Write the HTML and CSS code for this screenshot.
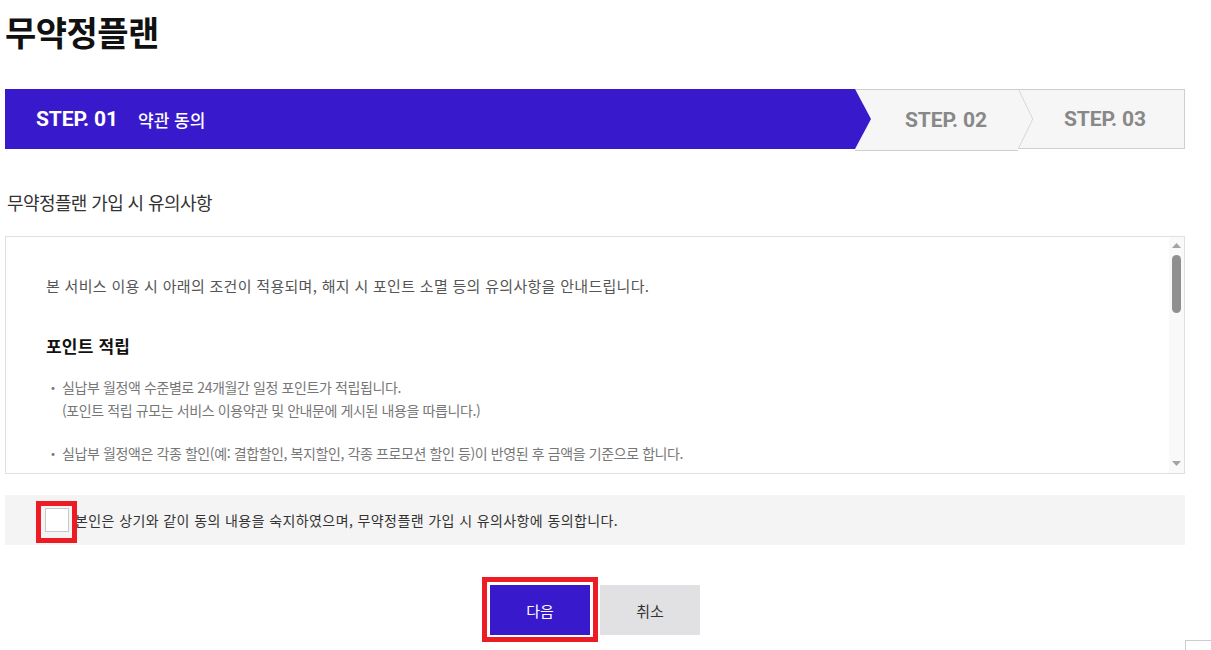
FILE: index.html
```html
<!DOCTYPE html>
<html lang="ko">
<head>
<meta charset="utf-8">
<title>무약정플랜</title>
<link rel="stylesheet" href="styles.css">
</head>
<body>
<div class="page">
  <h1 class="title">무약정플랜</h1>

  <div class="steps">
    <div class="step step-active">
      <span class="step-num">STEP. 01</span>
      <span class="step-name">약관 동의</span>
    </div>
    <div class="step step-idle step-two"><span class="step-num">STEP. 02</span></div>
    <svg class="step-chevron" width="16" height="60" viewBox="0 0 16 60" aria-hidden="true">
      <polyline points="0.5,0 15,30 0.5,60" fill="none" stroke="#d6d6d6" stroke-width="1"/>
    </svg>
    <div class="step step-idle step-three"><span class="step-num">STEP. 03</span></div>
  </div>

  <h2 class="subtitle">무약정플랜 가입 시 유의사항</h2>

  <div class="terms">
    <div class="terms-body">
      <p class="terms-intro">본 서비스 이용 시 아래의 조건이 적용되며, 해지 시 포인트 소멸 등의 유의사항을 안내드립니다.</p>

      <h3 class="terms-head">포인트 적립</h3>
      <ul class="terms-list">
        <li>실납부 월정액 수준별로 24개월간 일정 포인트가 적립됩니다.<br>(포인트 적립 규모는 서비스 이용약관 및 안내문에 게시된 내용을 따릅니다.)</li>
        <li>실납부 월정액은 각종 할인(예: 결합할인, 복지할인, 각종 프로모션 할인 등)이 반영된 후 금액을 기준으로 합니다.</li>
        <li>포인트는 매월 요금 청구 이후 익월에 적립됩니다.</li>
      </ul>

      <h3 class="terms-head">포인트 소멸</h3>
      <ul class="terms-list">
        <li>적립된 포인트의 유효기간은 적립일로부터 5년이며, 유효기간이 지난 포인트는 자동 소멸됩니다.</li>
        <li>서비스 해지 시 잔여 포인트는 해지일에 모두 소멸됩니다.</li>
      </ul>
    </div>
    <div class="scrollbar" aria-hidden="true">
      <svg class="sb-arrow sb-up" width="9" height="5" viewBox="0 0 9 5"><polygon points="0,5 4.5,0 9,5" fill="#a3a3a3"/></svg>
      <div class="sb-track"><div class="sb-thumb"></div></div>
      <svg class="sb-arrow sb-down" width="9" height="5" viewBox="0 0 9 5"><polygon points="0,0 4.5,5 9,0" fill="#a3a3a3"/></svg>
    </div>
  </div>

  <label class="agree">
    <span class="check-wrap"><input class="check" type="checkbox"></span>
    <span class="agree-text">본인은 상기와 같이 동의 내용을 숙지하였으며, 무약정플랜 가입 시 유의사항에 동의합니다.</span>
  </label>

  <div class="actions">
    <span class="btn-mark"><button class="btn btn-primary" type="button">다음</button></span>
    <button class="btn btn-cancel" type="button">취소</button>
  </div>
</div>
<div class="float-box"></div>
</body>
</html>
```

FILE: styles.css
```css
html {
  overflow: hidden;
}
html, body {
  margin: 0;
  padding: 0;
  background: #fff;
}
body {
  font-family: "Noto Sans CJK KR", "Noto Sans", sans-serif;
  color: #222;
}
.page {
  width: 1180px;
  padding-left: 5px;
  padding-bottom: 30px;
}
.title {
  margin: 0;
  padding-top: 10px;
  font-size: 34px;
  line-height: 44px;
  font-weight: 700;
  color: #111;
  letter-spacing: -0.5px;
}
.steps {
  margin-top: 35px;
  display: flex;
  height: 60px;
}
.step {
  display: flex;
  align-items: center;
  box-sizing: border-box;
  height: 60px;
}
.step-num {
  font-family: Roboto, "Liberation Sans", sans-serif;
  font-weight: 700;
  font-size: 21px;
  letter-spacing: -0.1px;
}
.step-active {
  flex: 1;
  position: relative;
  z-index: 1;
  background: #3819cb;
  color: #fff;
  padding-left: 31px;
  gap: 20px;
  clip-path: polygon(0 0, calc(100% - 16px) 0, 100% 50%, calc(100% - 16px) 100%, 0 100%);
}
.step-name {
  font-size: 17px;
  font-weight: 500;
  letter-spacing: 0;
}
.step-idle {
  background: #f6f6f6;
  color: #888;
  border-top: 1px solid #cfcfcf;
  border-bottom: 1px solid #cfcfcf;
  justify-content: center;
}
.step-two {
  width: 144px;
  margin-left: -16px;
  padding-left: 19px;
  box-sizing: content-box;
}
.step-chevron {
  display: block;
  background: #f6f6f6;
  border-top: 1px solid #cfcfcf;
  border-bottom: 1px solid #cfcfcf;
  box-sizing: border-box;
}
.step-three {
  width: 151px;
  border-right: 1px solid #cfcfcf;
  padding-right: 8px;
}
.subtitle {
  margin: 40px 0 0 2px;
  font-size: 18px;
  line-height: 26px;
  font-weight: 400;
  color: #333;
  letter-spacing: -0.6px;
}
.terms {
  margin-top: 21px;
  height: 236px;
  border: 1px solid #e0e0e0;
  display: flex;
}
.terms-body {
  flex: 1;
  overflow: hidden;
  padding: 0 40px;
}
.scrollbar {
  width: 15px;
  background: #f9f9f9;
  display: flex;
  flex-direction: column;
  align-items: center;
}
.sb-arrow {
  display: block;
  flex: none;
}
.sb-up {
  margin-top: 6px;
}
.sb-down {
  margin-bottom: 7px;
}
.sb-track {
  flex: 1;
  width: 9px;
  padding-top: 7px;
}
.sb-thumb {
  width: 9px;
  height: 58px;
  border-radius: 5px;
  background: #8f8f8f;
}
.terms-intro {
  margin: 39px 0 0;
  font-size: 15px;
  line-height: 20px;
  color: #555;
  letter-spacing: 0.3px;
}
.terms-head {
  margin: 40px 0 0;
  font-size: 17px;
  line-height: 20px;
  font-weight: 700;
  color: #111;
  letter-spacing: 0.2px;
}
.terms-list {
  list-style: none;
  margin: 20px 0 0;
  padding: 0 0 0 4px;
}
.terms-list li {
  position: relative;
  padding-left: 12px;
  font-size: 14px;
  line-height: 23px;
  color: #777;
  letter-spacing: -0.4px;
  margin-bottom: 20px;
}
.terms-list li::before {
  content: "・";
  position: absolute;
  left: -4px;
  top: 0;
}
.agree {
  margin-top: 21px;
  height: 50px;
  background: #f4f4f4;
  display: flex;
  align-items: center;
  padding-left: 40px;
  gap: 6px;
}
.check-wrap {
  position: relative;
  display: block;
  width: 24px;
  height: 24px;
}
.check-wrap::after {
  content: "";
  position: absolute;
  left: -9px;
  top: -7px;
  right: -8px;
  bottom: -11px;
  border: 5px solid #ed1c24;
  pointer-events: none;
}
.check {
  appearance: none;
  -webkit-appearance: none;
  display: block;
  margin: 0;
  width: 24px;
  height: 24px;
  background: #fff;
  border: 1px solid #c8c8c8;
  box-sizing: border-box;
}
.agree-text {
  font-size: 14px;
  color: #333;
  letter-spacing: 0.4px;
}
.actions {
  margin-top: 40px;
  display: flex;
  justify-content: center;
  gap: 10px;
}
.btn-mark {
  position: relative;
  display: block;
}
.btn-mark::after {
  content: "";
  position: absolute;
  left: -8px;
  top: -8px;
  right: -8px;
  bottom: -7px;
  border: 5px solid #ed1c24;
  pointer-events: none;
}
.btn {
  display: block;
  width: 100px;
  height: 50px;
  border: 0;
  font-family: "Noto Sans CJK KR", sans-serif;
  font-size: 15px;
  padding: 0;
}
.btn-primary {
  background: #3819cb;
  color: #fff;
}
.btn-cancel {
  background: #e1e1e3;
  color: #333;
}
.float-box {
  position: fixed;
  left: 1185px;
  top: 640px;
  width: 40px;
  height: 40px;
  border: 1px solid #ccc;
  background: #fff;
}
```
